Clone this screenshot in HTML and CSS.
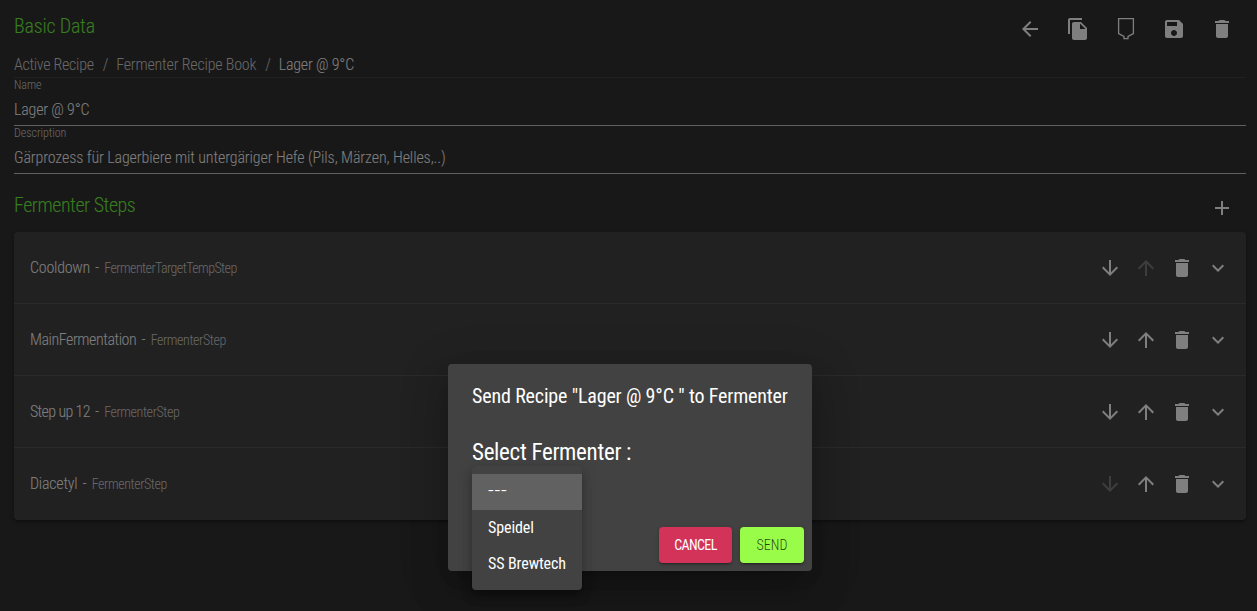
FILE: index.html
```
<!DOCTYPE html>
<html lang="en">
<head>
<meta charset="utf-8">
<title>Fermenter Recipe</title>
<link rel="stylesheet" href="styles.css">
</head>
<body>
<svg class="sprite" aria-hidden="true">
  <symbol id="back" viewBox="0 0 24 24"><path d="M20 11H7.83l5.59-5.59L12 4l-8 8 8 8 1.41-1.41L7.83 13H20v-2z"/></symbol>
  <symbol id="copy" viewBox="0 0 24 24"><path d="M16 1H4c-1.1 0-2 .9-2 2v14h2V3h12V1zm-1 4l6 6v10c0 1.100-.9 2-2 2H7.990C6.890 23 6 22.100 6 21V7c0-1.100.890-2 1.990-2h7zm-1 7h5.500L14 6.500V12z"/></symbol>
  <symbol id="tank" viewBox="0 0 24 24"><path fill="none" stroke="currentColor" stroke-width="1.3" d="M4.600 1.700h14.800v14.800l-5.400 3v2.200h-4v-2.200l-5.400-3z"/></symbol>
  <symbol id="save" viewBox="0 0 24 24"><path d="M17 3H5c-1.110 0-2 .9-2 2v14c0 1.100.890 2 2 2h14c1.100 0 2-.9 2-2V7l-4-4zm-5 16c-1.660 0-3-1.340-3-3s1.340-3 3-3 3 1.340 3 3-1.340 3-3 3zm3-10H5V5h10v4z"/></symbol>
  <symbol id="trash" viewBox="0 0 24 24"><path d="M6 19c0 1.100.9 2 2 2h8c1.100 0 2-.9 2-2V7H6v12zM19 4h-3.500l-1-1h-5l-1 1H5v2h14V4z"/></symbol>
  <symbol id="plus" viewBox="0 0 24 24"><path d="M19 13h-6v6h-2v-6H5v-2h6V5h2v6h6v2z"/></symbol>
  <symbol id="down" viewBox="0 0 24 24"><path d="M20 12l-1.410-1.410L13 16.170V4h-2v12.170l-5.580-5.590L4 12l8 8 8-8z"/></symbol>
  <symbol id="up" viewBox="0 0 24 24"><path d="M4 12l1.410 1.410L11 7.830V20h2V7.830l5.580 5.590L20 12l-8-8-8 8z"/></symbol>
  <symbol id="more" viewBox="0 0 24 24"><path d="M16.590 8.590L12 13.170 7.410 8.590 6 10l6 6 6-6z"/></symbol>
</svg>

<main class="page">
  <header class="header">
    <h1 class="title">Basic Data</h1>
    <div class="actions">
      <button class="icon-btn"><svg><use href="#back"/></svg></button>
      <button class="icon-btn"><svg><use href="#copy"/></svg></button>
      <button class="icon-btn"><svg><use href="#tank"/></svg></button>
      <button class="icon-btn"><svg><use href="#save"/></svg></button>
      <button class="icon-btn"><svg><use href="#trash"/></svg></button>
    </div>
  </header>
  <nav class="crumbs">
    <span class="crumb home">Active Recipe</span><span class="sep">/</span><span class="crumb">Fermenter Recipe Book</span><span class="sep">/</span><span class="crumb current">Lager @ 9°C</span>
  </nav>
  <div class="field"><label>Name</label><div class="value">Lager @ 9°C</div></div>
  <div class="field"><label>Description</label><div class="value long">Gärprozess für Lagerbiere mit untergäriger Hefe (Pils, Märzen, Helles,..)</div></div>

  <div class="section">
    <h2 class="title steps-title">Fermenter Steps</h2>
    <button class="icon-btn"><svg><use href="#plus"/></svg></button>
  </div>
  <ul class="steps">
    <li class="step"><div class="label"><span class="name">Cooldown</span><span class="dash"> - </span><small class="wide">FermenterTargetTempStep</small></div>
      <span class="tools"><svg><use href="#down"/></svg><svg class="off"><use href="#up"/></svg><svg><use href="#trash"/></svg><svg><use href="#more"/></svg></span></li>
    <li class="step"><div class="label"><span class="name snug">MainFermentation</span><span class="dash"> - </span><small>FermenterStep</small></div>
      <span class="tools"><svg><use href="#down"/></svg><svg><use href="#up"/></svg><svg><use href="#trash"/></svg><svg><use href="#more"/></svg></span></li>
    <li class="step"><div class="label"><span class="name tight">Step up 12</span><span class="dash"> - </span><small>FermenterStep</small></div>
      <span class="tools"><svg><use href="#down"/></svg><svg><use href="#up"/></svg><svg><use href="#trash"/></svg><svg><use href="#more"/></svg></span></li>
    <li class="step"><div class="label"><span class="name">Diacetyl</span><span class="dash"> - </span><small>FermenterStep</small></div>
      <span class="tools"><svg class="off"><use href="#down"/></svg><svg><use href="#up"/></svg><svg><use href="#trash"/></svg><svg><use href="#more"/></svg></span></li>
  </ul>
</main>

<div class="backdrop">
  <section class="dialog" role="dialog">
    <h2 class="dialog-title">Send Recipe "Lager @ 9°C " to Fermenter</h2>
    <h3 class="dialog-label">Select Fermenter :</h3>
    <ul class="menu">
      <li class="option selected">---</li>
      <li class="option">Speidel</li>
      <li class="option">SS Brewtech</li>
    </ul>
    <div class="buttons">
      <button class="btn cancel">CANCEL</button>
      <button class="btn send">SEND</button>
    </div>
  </section>
</div>
</body>
</html>
```
FILE: styles.css
```
* { box-sizing: border-box; }
body {
  margin: 0;
  height: 611px;
  overflow: hidden;
  background: #303030;
  color: #fff;
  font: 300 16px/24px Roboto, "Liberation Sans", sans-serif;
  font-stretch: 75%;
}
h1, h2, h3, ul { margin: 0; padding: 0; font-weight: 300; list-style: none; }
button { border: 0; background: none; color: inherit; font: inherit; font-stretch: inherit; }
svg { display: block; width: 24px; height: 24px; fill: currentColor; }
.sprite { display: none; }

.page { padding: 5px 11px 0 14px; }
.header, .section { display: flex; justify-content: space-between; }
.header { height: 48px; }
.title { color: #70fa40; font-size: 20px; line-height: 32px; padding-top: 5px; letter-spacing: -0.2px; }
.actions { display: flex; }
.icon-btn { width: 48px; height: 48px; padding: 12px; }

.crumbs { display: flex; height: 25px; border-bottom: 1px solid #424242; color: #d0d0d0; letter-spacing: -0.2px; }
.home { letter-spacing: -0.3px; }
.sep { margin: 0 8px 0 9px; }
.current { color: #fff; }

.field { height: 48px; border-bottom: 1px solid #c0c0c0; }
.field label { display: block; font-size: 12px; line-height: 14px; letter-spacing: -0.05px; color: #d0d0d0; }
.value { padding-top: 6px; letter-spacing: -0.2px; }
.long { letter-spacing: -0.12px; }

.section { padding-top: 10px; height: 58px; }
.steps-title { padding-top: 5px; letter-spacing: -0.47px; }
.steps { border-radius: 4px; background: #424242; box-shadow: 0 2px 2px rgba(0,0,0,.25), 0 1px 5px rgba(0,0,0,.2); }
.step { display: flex; align-items: center; justify-content: space-between; height: 72px; padding: 0 16px; border-bottom: 1px solid #555; }
.step:last-child { border-bottom-color: transparent; }
.name { letter-spacing: -0.25px; }
.snug { letter-spacing: -0.45px; }
.tight { letter-spacing: -0.65px; }
.dash { margin: 0 1.5px; }
.label small { font-size: 14px; color: #d0d0d0; letter-spacing: -0.4px; }
.label .wide { letter-spacing: -0.57px; }
.tools { display: flex; gap: 12px; }
.off { opacity: .3; }

.backdrop { position: absolute; inset: 0; background: rgba(0,0,0,.5); }
.dialog {
  position: absolute;
  left: 448px;
  top: 364px;
  width: 364px;
  height: 207px;
  display: flex;
  flex-direction: column;
  padding: 16px 8px 8px 24px;
  border-radius: 4px;
  background: #424242;
  box-shadow: 0 11px 15px -7px rgba(0,0,0,.2), 0 24px 38px 3px rgba(0,0,0,.14), 0 9px 46px 8px rgba(0,0,0,.12);
  font-weight: 400;
}
.dialog-title { font-size: 20px; line-height: 32px; font-weight: 400; white-space: nowrap; letter-spacing: -0.16px; }
.dialog-label { margin-top: 25px; font-size: 23px; line-height: 32px; font-weight: 400; letter-spacing: -0.3px; }
.menu {
  position: absolute;
  left: 24px;
  top: 102px;
  width: 110px;
  height: 124px;
  padding: 8px 0;
  border-radius: 4px;
  background: #424242;
  box-shadow: 0 5px 5px -3px rgba(0,0,0,.2), 0 8px 10px 1px rgba(0,0,0,.14), 0 3px 14px 2px rgba(0,0,0,.12);
}
.option { padding: 6px 16px; white-space: nowrap; font-weight: 400; letter-spacing: -0.1px; }
.selected { background: #616161; font-stretch: 100%; font-size: 20px; font-weight: 300; letter-spacing: 0.8px; line-height: 21px; padding-bottom: 9px; }
.buttons { display: flex; justify-content: flex-end; gap: 8px; margin-top: auto; }
.btn { height: 36px; padding: 0; border-radius: 4px; font-size: 14px; line-height: 36px; box-shadow: 0 3px 1px -2px rgba(0,0,0,.2), 0 2px 2px rgba(0,0,0,.14), 0 1px 5px rgba(0,0,0,.12); }
.cancel { width: 73px; background: #d33359; letter-spacing: -0.65px; }
.send { width: 64px; background: #98fc49; color: rgba(0,0,0,.75); font-weight: 300; }
```
